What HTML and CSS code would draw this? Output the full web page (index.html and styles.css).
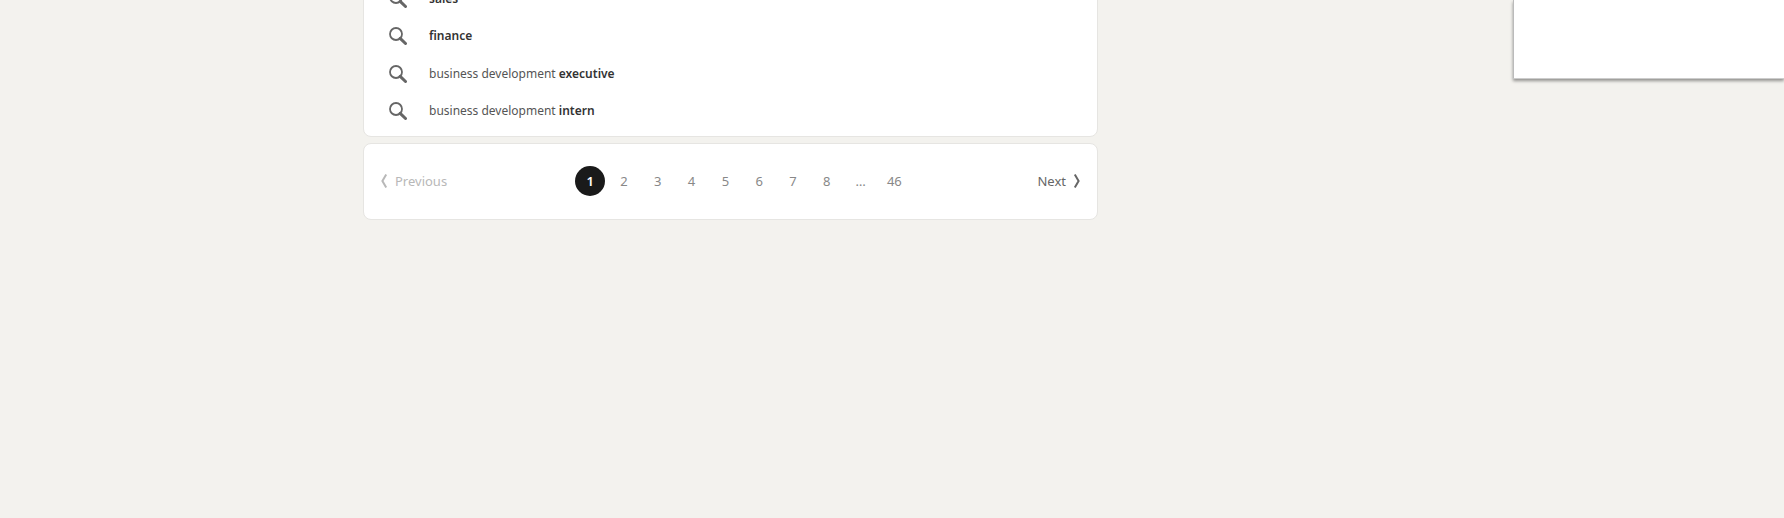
FILE: index.html
```html
<!DOCTYPE html>
<html lang="en">
<head>
<meta charset="utf-8">
<title>Job search</title>
<link rel="stylesheet" href="styles.css">
</head>
<body>
<svg class="defs" aria-hidden="true">
  <symbol id="search" viewBox="0 0 18 18">
    <circle cx="7" cy="7" r="6" fill="none" stroke="currentColor" stroke-width="1.8"/>
    <path d="M11.2 11.4L16.5 16.5" fill="none" stroke="currentColor" stroke-width="3" stroke-linecap="round"/>
  </symbol>
</svg>
<div class="page">
  <main class="results">
    <section class="card suggestions">
      <ul class="suggestion-list">
        <li><a class="suggestion" href="#"><svg class="search-icon"><use href="#search"/></svg><span><b>sales</b></span></a></li>
        <li><a class="suggestion" href="#"><svg class="search-icon"><use href="#search"/></svg><span><b>finance</b></span></a></li>
        <li><a class="suggestion" href="#"><svg class="search-icon"><use href="#search"/></svg><span>business development <b>executive</b></span></a></li>
        <li><a class="suggestion" href="#"><svg class="search-icon"><use href="#search"/></svg><span>business development <b>intern</b></span></a></li>
      </ul>
    </section>
    <nav class="card pagination" aria-label="Pagination">
      <button class="step" disabled><svg class="chevron" viewBox="0 0 8 14"><path d="M6.2 .6L2.4 7L6.2 13.4" fill="none" stroke="currentColor" stroke-width="2"/></svg>Previous</button>
      <ol class="pages">
        <li><button class="number current" aria-current="page">1</button></li>
        <li><button class="number">2</button></li>
        <li><button class="number">3</button></li>
        <li><button class="number">4</button></li>
        <li><button class="number">5</button></li>
        <li><button class="number">6</button></li>
        <li><button class="number">7</button></li>
        <li><button class="number">8</button></li>
        <li><button class="number">…</button></li>
        <li><button class="number">46</button></li>
      </ol>
      <button class="step">Next<svg class="chevron" viewBox="0 0 8 14"><path d="M1.8 .6L5.6 7L1.8 13.4" fill="none" stroke="currentColor" stroke-width="2"/></svg></button>
    </nav>
  </main>
  <aside class="messaging" aria-label="Messaging"></aside>
</div>
</body>
</html>
```
FILE: styles.css
```css
* {
  box-sizing: border-box;
}

body {
  margin: 0;
  min-height: 100vh;
  overflow: hidden;
  background: #f3f2ee;
  color: #555;
  font: 13px/20px "Noto Sans", "Open Sans", sans-serif;
}

.defs {
  display: none;
}

.page {
  display: grid;
  grid-template-columns: 363fr 735fr 415fr 271fr;
  align-items: start;
}

.results {
  grid-column: 2;
  display: grid;
  gap: 6px;
}

.card {
  border: 1px solid #e6e5e2;
  border-radius: 8px;
  background: #fff;
}

.suggestions {
  margin-top: -30px;
  padding: 9px 25px 6px;
}

.suggestion-list,
.pages {
  display: grid;
  margin: 0;
  padding: 0;
  list-style: none;
}

.suggestion-list {
  height: 150px;
  grid-auto-rows: 1fr;
}

.suggestion {
  display: flex;
  align-items: center;
  gap: 22px;
  height: 100%;
  color: #555;
  font-size: 12px;
  text-decoration: none;
}

.suggestion b {
  color: #333;
  font-weight: 600;
}

.search-icon {
  width: 18px;
  height: 18px;
  color: #666;
}

.pagination {
  display: flex;
  align-items: center;
  justify-content: space-between;
  padding: 22px 16px 23px;
}

.pages {
  width: 338px;
  grid-template-columns: repeat(10, 1fr);
  justify-items: center;
}

button {
  padding: 0;
  border: 0;
  background: none;
  color: inherit;
  font: inherit;
}

.number {
  display: block;
  width: 30px;
  height: 30px;
  border-radius: 50%;
  color: #888;
}

.current {
  background: #1a1a1a;
  color: #fff;
  font-weight: 600;
}

.step {
  display: flex;
  align-items: center;
  gap: 7px;
  color: #666;
}

.step:disabled {
  color: #b8b8b8;
}

.chevron {
  width: 8px;
  height: 14px;
}

.messaging {
  grid-column: 4;
  height: 79px;
  border-left: 1px solid #bbb;
  border-bottom: 1px solid #ccc;
  background: #fff;
  box-shadow: 0 2px 3px rgba(0, 0, 0, .4);
}
```
